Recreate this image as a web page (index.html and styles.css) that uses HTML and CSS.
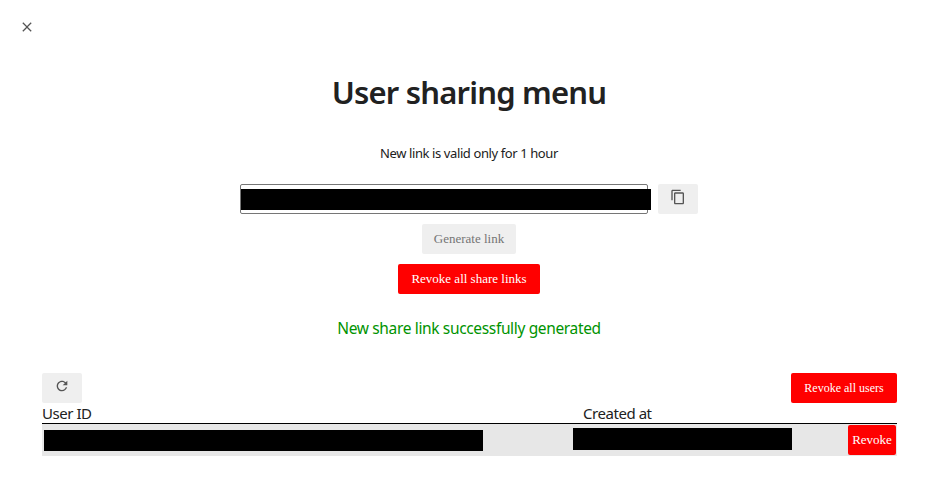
FILE: index.html
```html
<!DOCTYPE html>
<html lang="en">
<head>
<meta charset="utf-8">
<title>User sharing menu</title>
<link rel="stylesheet" href="styles.css">
</head>
<body>
<button class="close" aria-label="Close"><svg viewBox="0 0 24 24" width="18" height="18"><path d="M18.2 7 17 5.8 12 10.8 7 5.8 5.8 7 10.8 12 5.8 17 7 18.2 12 13.2 17 18.2 18.2 17 13.2 12z"/></svg></button>
<main>
  <h1>User sharing menu</h1>
  <p class="note">New link is valid only for 1 hour</p>
  <div class="link-row">
    <div class="link-field"><div class="redacted link-value"></div></div>
    <button class="btn icon-btn" aria-label="Copy"><svg viewBox="0 0 24 24" width="16" height="16"><path d="M16 1H4c-1.1 0-2 .9-2 2v14h2V3h12V1zm3 4H8c-1.1 0-2 .9-2 2v14c0 1.1.9 2 2 2h11c1.1 0 2-.9 2-2V7c0-1.1-.9-2-2-2zm0 16H8V7h11v14z"/></svg></button>
  </div>
  <button class="btn generate">Generate link</button>
  <button class="btn danger revoke-links">Revoke all share links</button>
  <p class="success">New share link successfully generated</p>
  <section class="users">
    <div class="toolbar">
      <button class="btn icon-btn" aria-label="Refresh"><svg viewBox="0 0 24 24" width="16" height="16"><path d="M17.65 6.35C16.2 4.9 14.21 4 12 4c-4.42 0-7.99 3.58-7.99 8s3.57 8 7.99 8c3.73 0 6.84-2.55 7.73-6h-2.08c-.82 2.33-3.04 4-5.65 4-3.31 0-6-2.69-6-6s2.69-6 6-6c1.66 0 3.14.69 4.22 1.78L13 11h7V4l-2.35 2.35z"/></svg></button>
      <button class="btn danger revoke-users">Revoke all users</button>
    </div>
    <div class="row head"><span>User ID</span><span>Created at</span></div>
    <div class="row item">
      <div class="redacted user-value"></div>
      <div class="redacted date-value"></div>
      <button class="btn danger revoke">Revoke</button>
    </div>
  </section>
</main>
</body>
</html>
```
FILE: styles.css
```css
* { box-sizing: border-box; }
body {
  margin: 0;
  height: 477px;
  overflow: hidden;
  background: #fff;
  color: #212121;
  font-family: "Noto Sans", sans-serif;
}
svg { display: block; fill: #555; }
.close {
  position: absolute;
  left: 18px;
  top: 18px;
  padding: 0;
  border: 0;
  background: none;
}
main {
  display: flex;
  flex-direction: column;
  align-items: center;
  padding: 70px 0 0 1px;
}
h1 {
  margin: 0;
  height: 44px;
  font-size: 31px;
  line-height: 44px;
  font-weight: 650;
  letter-spacing: -0.8px;
  white-space: nowrap;
  font-weight: 600;
}
.note {
  margin: 29px 0 0;
  font-size: 13px;
  line-height: 20px;
  letter-spacing: -0.4px;
}
.link-row {
  display: flex;
  gap: 10px;
  margin-top: 21px;
  width: 458px;
}
.link-field {
  width: 408px;
  height: 30px;
  padding-top: 4px;
  border: 1px solid #767676;
  border-radius: 2px;
}
.redacted { background: #000; }
.link-value { width: 410px; height: 21px; }
.btn {
  display: flex;
  align-items: center;
  justify-content: center;
  height: 30px;
  padding: 0;
  border: 0;
  border-radius: 2px;
  background: #efefef;
  color: #757575;
  font: 13px "Liberation Serif", serif;
  white-space: nowrap;
}
.icon-btn { width: 40px; padding-bottom: 4px; }
.danger { background: #f00; color: #fff; }
.generate { width: 94px; margin-top: 10px; }
.revoke-links { width: 142px; margin-top: 10px; }
.success {
  margin: 22px 0 0;
  color: #009300;
  font-size: 15.5px;
  line-height: 24px;
  letter-spacing: -0.35px;
}
.users { width: 855px; margin: 33px 0 0 1px; }
.toolbar { display: flex; justify-content: space-between; }
.revoke-users { width: 106px; font-size: 12px; }
.row { display: grid; grid-template-columns: 531px 1fr 49px; }
.head {
  height: 21px;
  grid-template-columns: 541px 1fr;
  border-bottom: 1px solid #000;
  font-size: 15px;
  line-height: 21px;
  letter-spacing: -0.45px;
}
.item { height: 32px; background: #e7e7e7; }
.user-value { width: 439px; height: 21px; margin: 6px 0 0 2px; }
.date-value { width: 219px; height: 22px; margin-top: 4px; }
.revoke { width: 48px; margin-top: 1px; }
```
